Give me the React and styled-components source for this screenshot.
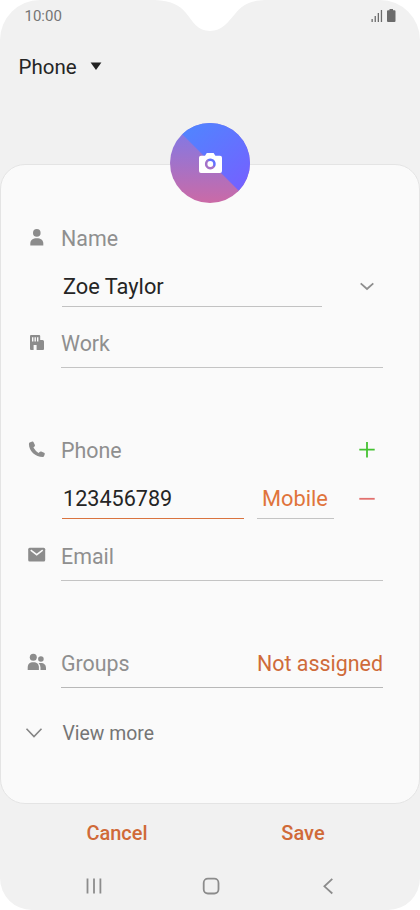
import React from "react";
import styled, { createGlobalStyle } from "styled-components";

const App = () => {
  const [name, setName] = React.useState("Zoe Taylor");
  const [phone, setPhone] = React.useState("123456789");

  return (
    <>
      <GlobalStyle />
      <Screen>
        <Notch viewBox="0 0 110 31">
          <path d="M0 0C16 1 24 4.500 31 13C38 22 43 31 55 31C67 31 73 22 80 14C87 5 95 0.500 110 0Z" />
        </Notch>
        <StatusBar>
          <span>10:00</span>
          <StatusIcons />
        </StatusBar>

        <Account>
          Phone
          <svg width="12" height="11" viewBox="0 0 12 11">
            <path d="M0.600 0.500H11.400L6 7.900Z" fill="#222" />
          </svg>
        </Account>

        <Card>
          <Avatar aria-label="photo">
            <AvatarArt />
          </Avatar>

          <Row $top={61}>
            <IconSlot>
              <PersonIcon />
            </IconSlot>
            <Label>Name</Label>
          </Row>
          <Row $top={21}>
            <IconSlot />
            <Underline $width={260} $left={1} $pad={7} $color="#c2c2c2">
              <Input value={name} onChange={(e) => setName(e.target.value)} />
            </Underline>
            <Action $left={37}>
              <svg width="16" height="16" viewBox="0 0 16 16">
                <path d="M1.700 5.300L8 11L14.300 5.300" stroke="#8e8e8e" />
              </svg>
            </Action>
          </Row>
          <Row $top={24}>
            <IconSlot>
              <WorkIcon />
            </IconSlot>
            <Underline $width={322} $pad={10}>
              <Label>Work</Label>
            </Underline>
          </Row>

          <Row $top={70}>
            <IconSlot>
              <CallIcon />
            </IconSlot>
            <Label $grow>Phone</Label>
            <Action $right={44}>
              <svg width="16" height="16" viewBox="0 0 16 16">
                <path d="M0.300 6.700H15.700M8 -1V14.500" stroke="#45c232" />
              </svg>
            </Action>
          </Row>
          <Row $top={22}>
            <IconSlot />
            <Underline $width={182} $left={1} $pad={6} $color="#d9733f">
              <Input
                $size={21.6}
                $lift
                value={phone}
                onChange={(e) => setPhone(e.target.value)}
              />
            </Underline>
            <Underline $width={77} $left={13} $pad={6}>
              <TypeText>Mobile</TypeText>
            </Underline>
            <Action $left={25}>
              <svg width="16" height="16" viewBox="0 0 16 16">
                <path d="M0.300 7.800H15.700" stroke="#e2706e" />
              </svg>
            </Action>
          </Row>
          <Row $top={25}>
            <IconSlot>
              <MailIcon />
            </IconSlot>
            <Underline $width={322} $pad={10}>
              <Label>Email</Label>
            </Underline>
          </Row>

          <Row $top={70}>
            <IconSlot>
              <GroupIcon />
            </IconSlot>
            <Underline $width={322} $pad={10} $color="#b8b8b8">
              <Label>Groups</Label>
              <GroupText>Not assigned</GroupText>
            </Underline>
          </Row>

          <Row $top={33}>
            <IconSlot>
              <svg width="24" height="24" viewBox="0 0 24 24">
                <path
                  d="M1.500 6.800L9 14.500L16.500 6.800"
                  fill="none"
                  stroke="#858585"
                  strokeWidth="1.600"
                />
              </svg>
            </IconSlot>
            <More>View more</More>
          </Row>
        </Card>

        <Footer>
          <FooterBtn>Cancel</FooterBtn>
          <FooterBtn>Save</FooterBtn>
        </Footer>

        <NavBar>
          <NavIcon viewBox="0 0 18 18">
            <path d="M2.500 1.500V16.500M9 1.500V16.500M15.400 1.500V16.500" />
          </NavIcon>
          <NavIcon viewBox="0 0 18 18">
            <rect x="1.700" y="1.700" width="14.800" height="14.800" rx="4.200" />
          </NavIcon>
          <NavIcon viewBox="0 0 18 18">
            <path d="M13.300 1.800L5.400 9.300L13.300 16.500" />
          </NavIcon>
        </NavBar>
      </Screen>
    </>
  );
};

const StatusIcons = () => (
  <svg width="26" height="14" viewBox="0 0 26 14" fill="#6b6b6b">
    <rect x="0.500" y="10" width="1.300" height="3" />
    <rect x="3.600" y="7" width="1.300" height="6" />
    <rect x="6.700" y="4" width="1.300" height="9" />
    <rect x="9.800" y="1" width="1.300" height="12" />
    <path d="M18.500 0H22V1.200H23.500Q24.500 1.200 24.500 2.200V12Q24.500 13 23.500 13H17Q16 13 16 12V2.200Q16 1.200 17 1.200H18.500Z" />
  </svg>
);

const AvatarArt = () => (
  <svg width="80" height="80" viewBox="0 0 80 80">
    <defs>
      <clipPath id="round">
        <circle cx="40" cy="40" r="40" />
      </clipPath>
      <linearGradient id="warm" x1="0" y1="0" x2="0" y2="1">
        <stop offset="0.150" stopColor="#8578e2" />
        <stop offset="1" stopColor="#cb6aa6" />
      </linearGradient>
      <linearGradient id="cool" x1="0.100" y1="0" x2="0.900" y2="1">
        <stop offset="0" stopColor="#4d88ff" />
        <stop offset="0.850" stopColor="#7263ff" />
      </linearGradient>
    </defs>
    <g clipPath="url(#round)">
      <rect width="80" height="80" fill="url(#warm)" />
      <path d="M1 0H80V79Z" fill="url(#cool)" />
    </g>
    <path
      fill="#fff"
      fillRule="evenodd"
      d="M31 32.800H35L36.800 30H43.600L45.400 32.800H50Q52 32.800 52 34.800V48Q52 50 50 50H31Q29 50 29 48V34.800Q29 32.800 31 32.800ZM40.300 35.600A5.400 5.400 0 1 0 40.310 35.600Z"
    />
    <circle cx="40.300" cy="41" r="2.900" fill="#fff" />
  </svg>
);

const PersonIcon = () => (
  <svg width="24" height="24" viewBox="0 0 24 24">
    <circle cx="11.800" cy="5.900" r="3.800" />
    <path d="M5.300 18.600V16.500C5.300 13 8 11.200 11.800 11.200S18.300 13 18.300 16.500V18.600Z" />
  </svg>
);

const WorkIcon = () => (
  <svg width="24" height="24" viewBox="0 0 24 24">
    <path
      fillRule="evenodd"
      d="M6 3H14.200Q15.200 3 15.200 4V8H17.500Q19 8 19 9.500V17Q19 18 18 18H11.600V13H8.600V18H6Q5 18 5 17V4Q5 3 6 3ZM7 5.200V9.600H8.400V5.200ZM9.500 5.200V9.600H10.900V5.200ZM12 5.200V9.600H13.400V5.200Z"
    />
  </svg>
);

const CallIcon = () => (
  <svg width="24" height="24" viewBox="0 0 24 24">
    <path d="M5.300 3.200L7.300 2.600Q8.200 2.400 8.600 3.200L9.900 6Q10.200 6.900 9.500 7.500L8.400 8.600Q10.300 12 13.500 13.900L14.600 12.900Q15.300 12.300 16.200 12.600L19.100 13.800Q20 14.200 19.800 15.100L19.100 17.100Q18.800 18 17.800 18C10.500 18 3.900 11.900 3.900 4.900Q3.900 3.600 5.300 3.200Z" />
  </svg>
);

const MailIcon = () => (
  <svg width="24" height="24" viewBox="0 0 24 24">
    <rect x="3.200" y="2.800" width="17" height="13.800" rx="1.500" />
    <path
      d="M5.700 5.200L11.700 9.700L17.700 5.200"
      fill="none"
      stroke="#fafafa"
      strokeWidth="1.500"
    />
  </svg>
);

const GroupIcon = () => (
  <svg width="24" height="24" viewBox="0 0 24 24">
    <circle cx="8.300" cy="5.300" r="3.500" />
    <path d="M2.700 18V15.500C2.700 12 4.700 10.300 8.300 10.300S13.900 12 13.900 15.500V18Z" />
    <circle cx="15.900" cy="7" r="2.800" />
    <path d="M13.600 11.200C18.500 10.300 21 12.500 21 16V18H15.500V15.500Q15.500 12.800 13.600 11.200Z" />
  </svg>
);

const GlobalStyle = createGlobalStyle`
  * {
    box-sizing: border-box;
  }
  body {
    margin: 0;
    background-color: #fff;
    font-family: Roboto, "Liberation Sans", sans-serif;
  }
  svg {
    display: block;
  }
`;

const Screen = styled.div`
  position: relative;
  display: flex;
  flex-direction: column;
  width: 420px;
  height: 910px;
  border-radius: 40px 40px 32px 32px;
  background-color: #f1f1f1;
  overflow: hidden;
`;

const Notch = styled.svg`
  position: absolute;
  top: 0;
  left: 155px;
  width: 110px;
  height: 31px;
  fill: #fff;
`;

const StatusBar = styled.div`
  display: flex;
  justify-content: space-between;
  align-items: center;
  height: 32px;
  padding: 0 23px 0 24.500px;
  font-size: 15px;
  color: #757575;
`;

const Account = styled.div`
  display: flex;
  align-items: center;
  gap: 13px;
  height: 70px;
  padding-left: 18.500px;
  font-size: 20.500px;
  color: #252525;
`;

const Card = styled.main`
  position: relative;
  height: 640px;
  margin-top: 62px;
  border: 1px solid #e4e4e4;
  border-radius: 25px;
  background-color: #fafafa;
`;

const Avatar = styled.button`
  position: absolute;
  top: -42px;
  left: 169px;
  padding: 0;
  border: 0;
  background: none;
`;

const Row = styled.div`
  display: flex;
  align-items: flex-start;
  margin-top: ${(props) => props.$top}px;
  line-height: 26px;
`;

const IconSlot = styled.div`
  flex: none;
  width: 24px;
  margin: 1px 12px 0 24px;

  svg {
    fill: #8c8c8c;
  }
`;

const Label = styled.span`
  flex: ${(props) => (props.$grow ? 1 : "none")};
  font-size: 21.400px;
  color: #8f8f8f;
`;

const Underline = styled.div`
  display: flex;
  justify-content: space-between;
  flex: none;
  width: ${(props) => props.$width}px;
  margin-left: ${(props) => props.$left || 0}px;
  padding-bottom: ${(props) => props.$pad}px;
  border-bottom: 1px solid ${(props) => props.$color || "#c4c4c4"};
`;

const Input = styled.input`
  width: 100%;
  height: 26px;
  padding: 0 0 ${(props) => (props.$lift ? 2 : 0)}px 1px;
  border: 0;
  outline: 0;
  background: none;
  font-family: inherit;
  font-size: ${(props) => props.$size || 21.8}px;
  color: #252525;
`;

const TypeText = styled.span`
  margin: 0 auto;
  padding-right: 1px;
  font-size: 21.800px;
  color: #e0743c;
`;

const GroupText = styled.span`
  font-size: 21.400px;
  color: #cf6b3a;
`;

const Action = styled.button`
  display: flex;
  align-items: center;
  height: 26px;
  margin: 0 ${(props) => props.$right || 0}px 0 ${(props) => props.$left || 0}px;
  padding: 0;
  border: 0;
  background: none;

  svg {
    fill: none;
    stroke-width: 1.800px;
    overflow: visible;
  }
`;

const More = styled.span`
  margin-left: 1.500px;
  font-size: 19.400px;
  color: #757575;
`;

const Footer = styled.div`
  display: flex;
  justify-content: space-around;
  height: 58px;
  padding: 0 24px;
`;

const FooterBtn = styled.button`
  width: 186px;
  padding: 0;
  border: 0;
  background: none;
  font-family: inherit;
  font-size: 20px;
  font-weight: 500;
  color: #d06a38;
`;

const NavBar = styled.nav`
  display: flex;
  justify-content: space-between;
  align-items: center;
  height: 48px;
  padding: 0 83px 1px 85px;
`;

const NavIcon = styled.svg`
  width: 18px;
  height: 18px;
  fill: none;
  stroke: #8c8c8c;
  stroke-width: 1.800px;
`;

export default App;
